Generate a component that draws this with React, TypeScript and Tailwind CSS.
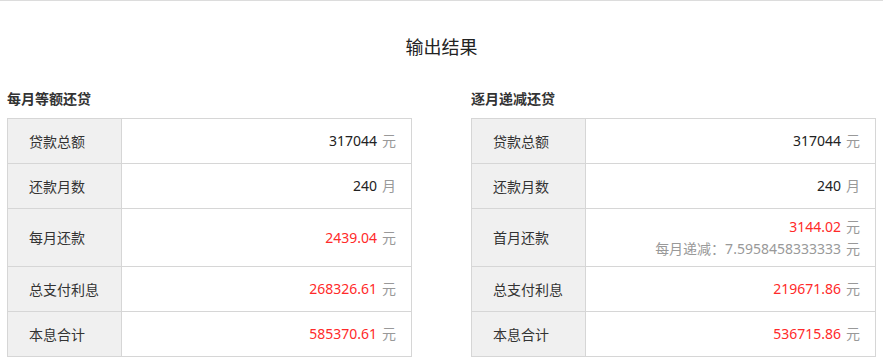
import React from "react";

type Row = {
  label: string;
  value: string;
  unit: string;
  red?: boolean;
  note?: string;
};

const equalPayment: Row[] = [
  { label: "贷款总额", value: "317044", unit: "元" },
  { label: "还款月数", value: "240", unit: "月" },
  { label: "每月还款", value: "2439.04", unit: "元", red: true },
  { label: "总支付利息", value: "268326.61", unit: "元", red: true },
  { label: "本息合计", value: "585370.61", unit: "元", red: true },
];

const decreasing: Row[] = [
  { label: "贷款总额", value: "317044", unit: "元" },
  { label: "还款月数", value: "240", unit: "月" },
  { label: "首月还款", value: "3144.02", unit: "元", red: true, note: "每月递减：7.5958458333333" },
  { label: "总支付利息", value: "219671.86", unit: "元", red: true },
  { label: "本息合计", value: "536715.86", unit: "元", red: true },
];

function ResultTable({ title, rows }: { title: string; rows: Row[] }) {
  return (
    <div className="w-[405px]">
      <h3 className="text-[14px] leading-[20px] font-bold text-[#333] mb-[9px]">{title}</h3>
      <div className="border-t border-l border-[#d6d6d6]">
        {rows.map((r, i) => (
          <div key={i} className={`flex border-b border-[#d6d6d6] ${i === 2 ? "h-[58px]" : "h-[45px]"}`}>
            <div className="w-[114px] shrink-0 bg-[#f0f0f0] border-r border-[#d6d6d6] flex items-center pl-[21px] text-[14px] text-[#333]">
              {r.label}
            </div>
            <div className="flex-1 border-r border-[#d6d6d6] flex flex-col justify-center items-end pr-[15px] text-[14px] leading-[22px]">
              <div>
                <span className={r.red ? "text-[#ff2a2a]" : "text-[#222]"}>{r.value}</span>
                <span className="ml-[5px] text-[#999]">{r.unit}</span>
              </div>
              {r.note && (
                <div className="text-[#999]">
                  {r.note}
                  <span className="ml-[5px]">元</span>
                </div>
              )}
            </div>
          </div>
        ))}
      </div>
    </div>
  );
}

export default function App() {
  return (
    <div
      className="w-[883px] h-[364px] bg-white border-t border-[#dcdcdc] overflow-hidden"
      style={{ fontFamily: '"Noto Sans", "Noto Sans CJK SC", sans-serif' }}
    >
      <h2 className="pt-[34px] text-center text-[18px] leading-[24px] text-[#222]">输出结果</h2>
      <div className="mt-[30px] px-[7px] flex justify-between">
        <ResultTable title="每月等额还贷" rows={equalPayment} />
        <ResultTable title="逐月递减还贷" rows={decreasing} />
      </div>
    </div>
  );
}
